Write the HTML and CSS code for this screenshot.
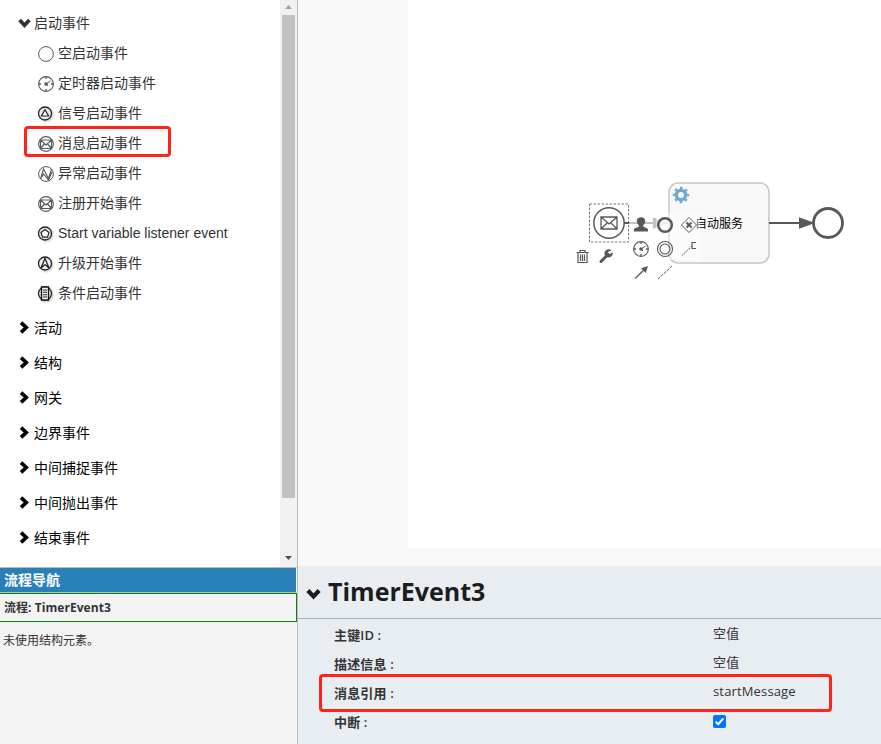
FILE: index.html
```html
<!DOCTYPE html>
<html lang="zh-CN">
<head>
<meta charset="utf-8">
<title>流程设计器</title>
<link rel="stylesheet" href="styles.css">
</head>
<body>
<svg class="defs" width="0" height="0">
  <defs>
    <symbol id="chev" viewBox="0 0 10 12"><path d="M1.800 1.500 6.600 6 1.800 10.500" fill="none" stroke="currentColor" stroke-width="3.400"/></symbol>
    <symbol id="timer" viewBox="0 0 18 18">
      <circle cx="9" cy="9" r="7.4" fill="none" stroke="#585858" stroke-width="1.1"/>
      <path d="M9 2v2M9 14v2M2 9h2M14 9h2" stroke="#585858" stroke-width="1.3"/>
      <path d="M9 9l4.500-3M9 9l2 2" stroke="#585858" stroke-width="1"/><circle cx="9" cy="9" r="1.800" fill="#585858"/>
    </symbol>
    <symbol id="mail" viewBox="0 0 18 18">
      <circle cx="9" cy="9" r="7.4" fill="none" stroke="#585858" stroke-width="1.1"/>
      <path d="M3.500 5h11v8.500h-11zM3.500 5 9 10l5.500-5M3.500 13.500l4-4.500M14.500 13.500l-4-4.500" fill="none" stroke="#585858" stroke-width="1.200"/>
    </symbol>
  </defs>
</svg>
<div class="app">
  <aside class="side">
    <div class="palette">
      <div class="tree">
        <div class="group open"><svg class="chev"><use href="#chev"/></svg><span>启动事件</span></div>
        <ul class="items">
          <li><svg viewBox="0 0 18 18"><circle cx="9" cy="9" r="7.400" fill="none" stroke="#585858"/></svg><span>空启动事件</span></li>
          <li><svg><use href="#timer"/></svg><span>定时器启动事件</span></li>
          <li class="shaded"><svg viewBox="0 0 18 18"><circle cx="8" cy="8.500" r="6.500" fill="#ececec" stroke="#222" stroke-width="1.300"/><path d="M8 4.700 11.600 11H4.400z" fill="#fff" stroke="#222" stroke-width="1.200"/></svg><span>信号启动事件</span></li>
          <li class="marked"><svg><use href="#mail"/></svg><span>消息启动事件</span></li>
          <li><svg viewBox="0 0 18 18"><circle cx="9" cy="9" r="7.400" fill="none" stroke="#585858"/><path d="M3.500 14 6.500 4l5 9.500 3-9.500M3.500 14l3-5 5 6 3.500-8" fill="none" stroke="#585858" stroke-width="1.100"/></svg><span>异常启动事件</span></li>
          <li><svg><use href="#mail"/></svg><span>注册开始事件</span></li>
          <li class="shaded"><svg viewBox="0 0 18 18"><circle cx="8" cy="8.500" r="6.500" fill="#ececec" stroke="#222" stroke-width="1.300"/><path d="M8 4.500 12 7.500l-1.500 4.700h-5L4 7.500z" fill="#fff" stroke="#222" stroke-width="1.200"/></svg>Start variable listener event</li>
          <li class="shaded"><svg viewBox="0 0 18 18"><circle cx="8" cy="8.500" r="6.500" fill="#ececec" stroke="#222" stroke-width="1.300"/><path d="M8 3.500 12 13 8 9.500 4 13z" fill="#fff" stroke="#222" stroke-width="1.300"/></svg><span>升级开始事件</span></li>
          <li class="shaded"><svg viewBox="0 0 18 18"><circle cx="8" cy="8.500" r="6.500" fill="#ececec" stroke="#222" stroke-width="1.300"/><path d="M4.500 2h7v13h-7z" fill="#fff" stroke="#111" stroke-width="1.400"/><path d="M6 5h4M6 7.300h4M6 9.700h4M6 12h4" stroke="#111" stroke-width="1.100"/></svg><span>条件启动事件</span></li>
        </ul>
        <div class="group"><svg class="chev"><use href="#chev"/></svg><span>活动</span></div>
        <div class="group"><svg class="chev"><use href="#chev"/></svg><span>结构</span></div>
        <div class="group"><svg class="chev"><use href="#chev"/></svg><span>网关</span></div>
        <div class="group"><svg class="chev"><use href="#chev"/></svg><span>边界事件</span></div>
        <div class="group"><svg class="chev"><use href="#chev"/></svg><span>中间捕捉事件</span></div>
        <div class="group"><svg class="chev"><use href="#chev"/></svg><span>中间抛出事件</span></div>
        <div class="group"><svg class="chev"><use href="#chev"/></svg><span>结束事件</span></div>
      </div>
      <div class="scroll">
        <svg width="17" height="15" viewBox="0 0 17 15"><path d="M5 9h7L8.500 5z" fill="#a3a3a3"/></svg>
        <div class="thumb"></div>
        <svg width="17" height="18" viewBox="0 0 17 18"><path d="M5 7h7L8.500 11z" fill="#505050"/></svg>
      </div>
    </div>
    <div class="nav">
      <div class="nav-title">流程导航</div>
      <div class="nav-current">流程: TimerEvent3</div>
      <div class="nav-empty">未使用结构元素。</div>
    </div>
  </aside>
  <main class="main">
    <div class="canvas">
      <div class="sheet">
        <svg width="473" height="548" viewBox="408 0 473 548">
          <rect x="669" y="183" width="100" height="80" rx="9" fill="#f8f8f8" stroke="#c6c6c6" stroke-width="1.500"/>
          <g transform="translate(681 195)" fill="none" stroke="#72a7d0"><circle r="4.600" stroke-width="3.400"/><circle r="6.900" stroke-width="2.600" stroke-dasharray="2.500 2.919" stroke-dashoffset="1.250"/></g>
          <path d="M769 223h31" stroke="#585858" stroke-width="2"/><path d="M799 217.300 815 223l-16 5.700z" fill="#585858"/>
          <circle cx="828" cy="223" r="14.500" fill="#fff" stroke="#585858" stroke-width="2.800"/>
          <text class="task" x="695" y="228">自动服务</text>
          <path d="M625 223h30" stroke="#c0c0c0" stroke-width="2"/><path d="M653 217.300 669 223l-16 5.700z" fill="#c0c0c0"/>
          <rect x="656" y="213" width="44" height="47" fill="#fff" opacity=".45"/>
          <rect x="589.500" y="204" width="39" height="38" fill="none" stroke="#777" stroke-dasharray="2.500 1.500"/>
          <circle cx="609" cy="223" r="15.200" fill="#fff" stroke="#585858" stroke-width="1.500"/>
          <path d="M601 217h16v12h-16zM601 217l8 7 8-7M601 229l6-6M617 229l-6-6" fill="none" stroke="#585858" stroke-width="1.300"/>
          <path d="M624 223h5" stroke="#585858" stroke-width="2"/>
          <path d="M634 231.500v-2.300c1-1.200 3-1.700 4.800-2.400v-1.600c-1.300-1.200-2-2.800-2-4.300 0-2.200 1.800-3.600 4.200-3.600s4.200 1.400 4.200 3.600c0 1.500-.7 3.100-2 4.300v1.600c1.800.7 3.800 1.200 4.800 2.400v2.300z" fill="#585858"/>
          <circle cx="665" cy="225" r="6.800" fill="#fff" fill-opacity=".5" stroke="#585858" stroke-width="2.500"/>
          <path d="M689 217.500l7.500 7.500-7.500 7.500-7.500-7.500z" fill="#fff" stroke="#585858"/><path d="M686.500 222.500l5 5m0-5-5 5" stroke="#585858" stroke-width="2"/>
          <svg x="632" y="240" width="18" height="18"><use href="#timer"/></svg>
          <g fill="none" stroke="#585858" stroke-width="1.100"><circle cx="665" cy="249" r="7.500"/><circle cx="665" cy="249" r="5"/></g>
          <path d="M682 255.500 692 246" fill="none" stroke="#585858" stroke-dasharray="2 1"/><path d="M696 242.500h-4v6h4" fill="none" stroke="#585858" stroke-width="1.200"/>
          <path d="M635 278.500 645 269" stroke="#585858" stroke-width="1.300"/><path d="M648 266l-2.200 7-4.800-4.800z" fill="#585858"/>
          <path d="M658 279 672 266" stroke="#585858" stroke-dasharray="3 1"/>
          <g fill="none" stroke="#585858" stroke-width="1.200"><path d="M576.500 252.500h12M580 252v-1.500h5v1.500M578 253v9.500h9V253M580.500 254.500v6.500M582.500 254.500v6.500M584.500 254.500v6.500"/></g>
          <path d="M601 261.500 608 254.500" stroke="#585858" stroke-width="3" stroke-linecap="round"/><path d="M611.500 250.300a4.200 4.200 0 1 0 1.300 3.300l-.2-1.300-3 1.900-2-1.900z" fill="#585858"/>
        </svg>
      </div>
    </div>
    <section class="props">
      <header><svg class="chev"><use href="#chev"/></svg><h1>TimerEvent3</h1></header>
      <div class="table">
        <div class="row"><b>主键ID :</b><span>空值</span></div>
        <div class="row"><b>描述信息 :</b><span>空值</span></div>
        <div class="row ref"><b>消息引用 :</b><span>startMessage</span></div>
        <div class="row"><b>中断 :</b><span class="check"><svg width="13" height="13" viewBox="0 0 13 13"><rect width="13" height="13" rx="2" fill="#0075ff"/><path d="M2.700 6.800 5.200 9.200 10.300 3.500" fill="none" stroke="#fff" stroke-width="2"/></svg></span></div>
      </div>
    </section>
  </main>
</div>
</body>
</html>
```
FILE: styles.css
```css
*, *::before { box-sizing: border-box; }
body { margin: 0; font-family: "Open Sans", "Noto Sans CJK SC", sans-serif; color: #333; overflow: hidden; }
.defs { display: block; }
.app { display: grid; grid-template-columns: 298px 1fr; width: 881px; height: 744px; }
.side { display: flex; flex-direction: column; border-right: 1px solid #bbb; background: #f3f3f3; }
.palette { display: flex; height: 567px; background: #fff; }
.tree { flex: 1; padding-top: 8px; font: 14px "Liberation Sans", "Noto Sans CJK SC", sans-serif; color: #333; white-space: nowrap; }
.tree span { padding-bottom: 2px; }
.group { display: flex; align-items: center; height: 35px; padding-left: 19px; color: #000; gap: 4px; }
.group.open { height: 30px; color: #333; }
.chev { width: 11px; height: 13px; flex: none; }
.open .chev, header .chev { transform: rotate(90deg); }
.items { list-style: none; margin: 0 0 2px; padding: 0 0 0 37px; }
.items li { display: flex; align-items: center; height: 30px; gap: 3px; position: relative; }
.items svg { width: 18px; height: 18px; flex: none; margin-top: 1px; }
.shaded svg { filter: drop-shadow(1px 1px 1px rgba(0, 0, 0, .25)); }
.marked::before { content: ""; position: absolute; left: -13px; top: -2px; width: 147px; height: 31px; border: 3px solid #ff2419; border-radius: 4px; }
.scroll { width: 17px; background: #f1f1f1; display: flex; flex-direction: column; }
.scroll svg { display: block; flex: none; }
.thumb { width: 13px; height: 483px; margin: 0 2px 51px; background: #c1c1c1; flex: none; }
.nav { flex: 1; border-top: 1px solid #bbb; font-size: 12px; }
.nav-title { height: 25px; line-height: 24px; padding-left: 4px; background: #2980b9; color: #fff; font-size: 14px; font-weight: 700; border-bottom: 1px solid #bbb; margin-right: 1px; }
.nav-current { height: 29px; line-height: 27px; padding-left: 4px; font-weight: 700; letter-spacing: .05px; border: 1px solid #080; border-left: 0; }
.nav-empty { padding: 10px 3px; line-height: 17px; }
.main { display: flex; flex-direction: column; min-width: 0; }
.canvas { height: 566px; padding: 0 0 18px 110px; background: #f8f8f8; }
.sheet { height: 548px; background: #fff; }
.sheet > svg { display: block; }
.task { font: 12px "Liberation Sans", "Noto Sans CJK SC", sans-serif; fill: #000; }
.props { flex: 1; background: #e8edf1; font-size: 13px; letter-spacing: .15px; }
header { display: flex; align-items: center; height: 53px; border-bottom: 1px solid #a3adbd; padding-left: 9px; gap: 8px; color: #1c1c1c; }
header .chev { width: 13px; height: 15px; margin-top: 5px; }
h1 { margin: -3px 0 0; font: 700 25px "Open Sans", sans-serif; letter-spacing: 0; }
.table { padding-top: 1px; }
.row { display: grid; grid-template-columns: 379px 1fr; align-items: center; height: 29px; padding-left: 36px; position: relative; }
.row b { font-weight: 600; margin-top: -1px; }
.row span { margin-top: -4px; }
.row .check { margin-top: 0; }
.check svg { display: block; }
.ref::before { content: ""; position: absolute; left: 21px; top: -4px; width: 513px; height: 38px; border: 3px solid #ff2419; border-radius: 4px; }
```
